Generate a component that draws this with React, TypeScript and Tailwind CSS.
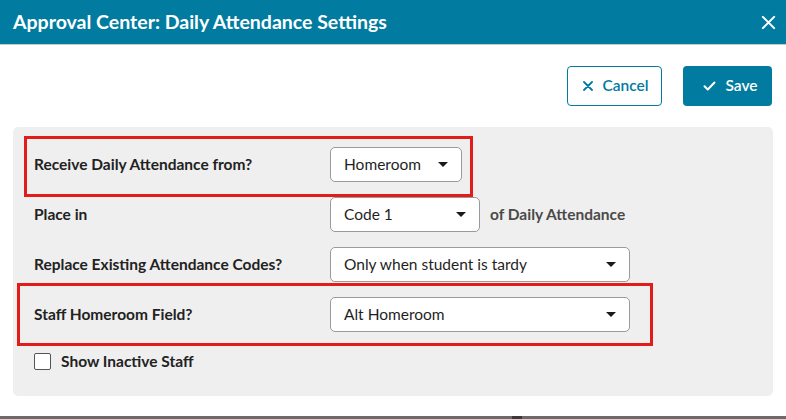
import React from "react";

type SelectProps = {
  value: string;
  width: string;
};

function Caret() {
  return (
    <svg width="10" height="5" viewBox="0 0 10 5" className="shrink-0">
      <path d="M0 0h10L5 5z" fill="#1a1a1a" />
    </svg>
  );
}

function FakeSelect({ value, width }: SelectProps) {
  return (
    <div
      className={`${width} h-[35px] flex items-center justify-between pl-[13px] pr-[13px] bg-white border border-[#9a9a9a] rounded-[5px] text-[15.5px] text-[#1f1f1f]`}
    >
      <span>{value}</span>
      <Caret />
    </div>
  );
}

function Row({ label, children }: { label: string; children: React.ReactNode }) {
  return (
    <div className="flex items-center">
      <div className="w-[296px] text-[15.5px] font-bold text-[#222]">{label}</div>
      {children}
    </div>
  );
}

function App() {
  return (
    <div
      className="w-[786px] h-[419px] bg-white flex flex-col overflow-hidden"
      style={{ fontFamily: "Lato, 'Noto Sans', sans-serif" }}
    >
      <header className="h-[45px] shrink-0 bg-[#017b9f] flex items-center justify-between pl-[13px] pr-[10px] border-b border-[#c8c8c8]">
        <h1 className="text-[19.5px] font-bold text-white">Approval Center: Daily Attendance Settings</h1>
        <svg width="15" height="15" viewBox="0 0 16 16">
          <path d="M2 2l12 12M14 2L2 14" stroke="white" strokeWidth="2.2" strokeLinecap="round" />
        </svg>
      </header>

      <div className="flex justify-end gap-[21px] pt-[21px] pr-[14px]">
        <button className="w-[95px] h-[40px] flex items-center justify-center gap-[9px] pl-[3px] border border-[#017b9f] rounded-[4px] text-[#017b9f] text-[15.5px] font-semibold bg-white">
          <svg width="10" height="10" viewBox="0 0 10 10">
            <path d="M1 1l8 8M9 1L1 9" stroke="#017b9f" strokeWidth="1.8" strokeLinecap="round" />
          </svg>
          Cancel
        </button>
        <button className="w-[89px] h-[40px] flex items-center justify-center gap-[9px] pl-[6px] bg-[#017b9f] rounded-[4px] text-white text-[15.5px] font-semibold">
          <svg width="13" height="10" viewBox="0 0 13 10">
            <path d="M1.5 5.2l3.3 3.3L11.5 1.5" stroke="white" strokeWidth="2" fill="none" strokeLinecap="round" strokeLinejoin="round" />
          </svg>
          Save
        </button>
      </div>

      <section className="relative mx-[13px] mt-[21px] h-[269px] bg-[#efefef] rounded-[5px] pl-[21px] pt-[20px]">
        <div className="flex flex-col gap-[15px]">
          <Row label="Receive Daily Attendance from?">
            <FakeSelect value="Homeroom" width="w-[132px]" />
          </Row>
          <Row label="Place in">
            <FakeSelect value="Code 1" width="w-[150px]" />
            <span className="ml-[10px] text-[15.5px] font-bold text-[#4a4a4a]">of Daily Attendance</span>
          </Row>
          <Row label="Replace Existing Attendance Codes?">
            <FakeSelect value="Only when student is tardy" width="w-[300px]" />
          </Row>
          <Row label="Staff Homeroom Field?">
            <FakeSelect value="Alt Homeroom" width="w-[300px]" />
          </Row>
        </div>
        <label className="mt-[18px] flex items-center gap-[10px] text-[15.5px] font-bold text-[#222]">
          <span className="w-[17px] h-[17px] bg-white border border-[#555] rounded-[2px]" />
          Show Inactive Staff
        </label>

        {/* annotation boxes */}
        <div className="absolute left-[11px] top-[9px] w-[449px] h-[61px] border-[3px] border-[#e21b1b] pointer-events-none" />
        <div className="absolute left-[4px] top-[156px] w-[636px] h-[63px] border-[3px] border-[#e21b1b] pointer-events-none" />
      </section>

      <div className="mt-auto h-[3px] bg-[#6b6b6b] flex">
        <div className="ml-[512px] w-[10px] bg-[#3a3a3a]" />
      </div>
    </div>
  );
}

export default App;
